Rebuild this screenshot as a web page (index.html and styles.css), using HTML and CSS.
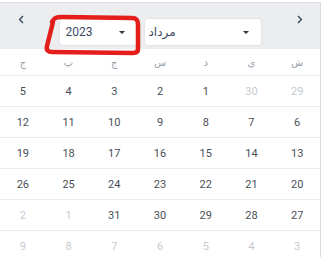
FILE: index.html
```html
<!DOCTYPE html>
<html lang="fa">
<head>
<meta charset="utf-8">
<link rel="stylesheet" href="styles.css">
</head>
<body>
<div class="picker">
  <div class="head">
    <span class="nav"><svg width="7" height="9" viewBox="0 0 7 9"><path d="M5 1 L1.6 4.5 L5 8" fill="none" stroke="#3c4b64" stroke-width="1.4"/></svg></span>
    <div class="selects">
      <div class="sel year"><span>2023</span><i class="caret"></i></div>
      <div class="sel month"><span>مرداد</span><i class="caret"></i></div>
    </div>
    <span class="nav"><svg width="7" height="9" viewBox="0 0 7 9"><path d="M2 1 L5.4 4.5 L2 8" fill="none" stroke="#3c4b64" stroke-width="1.4"/></svg></span>
  </div>
  <div class="week">
    <span>ش</span><span>ی</span><span>د</span><span>س</span><span>چ</span><span>پ</span><span>ج</span>
  </div>
  <div class="row"><span class="m">29</span><span class="m">30</span><span>1</span><span>2</span><span>3</span><span>4</span><span>5</span></div>
  <div class="row"><span>6</span><span>7</span><span>8</span><span>9</span><span>10</span><span>11</span><span>12</span></div>
  <div class="row"><span>13</span><span>14</span><span>15</span><span>16</span><span>17</span><span>18</span><span>19</span></div>
  <div class="row"><span>20</span><span>21</span><span>22</span><span>23</span><span>24</span><span>25</span><span>26</span></div>
  <div class="row"><span>27</span><span>28</span><span>29</span><span>30</span><span>31</span><span class="m">1</span><span class="m">2</span></div>
  <div class="row"><span class="m">3</span><span class="m">4</span><span class="m">5</span><span class="m">6</span><span class="m">7</span><span class="m">8</span><span class="m">9</span></div>
</div>
<svg class="mark" width="322" height="60" viewBox="0 0 322 60"><path d="M52 22 C54 18 56 17 62 17 L132 18 C137 18 138 21 138 25 L138 49 C138 52 136 53 133 53 L52 52 C48 52 46 50 47 46 C49 38 51 30 53 22" fill="none" stroke="#e41e1b" stroke-width="4.5" stroke-linecap="round" stroke-linejoin="round"/></svg>
</body>
</html>
```
FILE: styles.css
```css
html, body {
  margin: 0;
  padding: 0;
  background: #fff;
}
body {
  font-family: Roboto, "DejaVu Sans", sans-serif;
  overflow: hidden;
}
.picker {
  width: 320px;
  margin-top: 2px;
  border-top: 1px solid #d8dbe0;
  border-right: 1px solid #d8dbe0;
}
.head {
  display: flex;
  justify-content: space-between;
  align-items: flex-start;
  height: 46px;
  padding-top: 15px;
  box-sizing: border-box;
  background: #ebedef;
}
.nav {
  width: 42px;
  display: flex;
  justify-content: center;
  margin-top: -3px;
}
.nav svg { display: block; }
.selects {
  display: flex;
  gap: 6px;
}
.sel {
  height: 28px;
  box-sizing: border-box;
  background: #fff;
  border: 1px solid #e2e5e9;
  border-radius: 4px;
  display: flex;
  align-items: center;
  justify-content: space-between;
  padding: 0 12px 0 6px;
  color: #3c4b64;
  font-size: 12px;
}
.year { width: 79px; }
.month { width: 118px; padding-left: 4px; }
.caret {
  width: 0;
  height: 0;
  border-left: 3px solid transparent;
  border-right: 3px solid transparent;
  border-top: 3px solid #333;
}
.week, .row {
  display: grid;
  grid-template-columns: repeat(7, 1fr);
  direction: rtl;
  text-align: center;
}
.week {
  height: 26px;
  align-items: center;
  font-size: 10px;
  color: #9aa0a8;
}
.row {
  height: 31px;
  box-sizing: border-box;
  border-top: 1px solid #eceef1;
  align-items: center;
  font-size: 11px;
  color: #4a4f57;
}
.row .m { color: #c6cad0; }
.mark {
  position: absolute;
  top: 0;
  left: 0;
  pointer-events: none;
}
```
